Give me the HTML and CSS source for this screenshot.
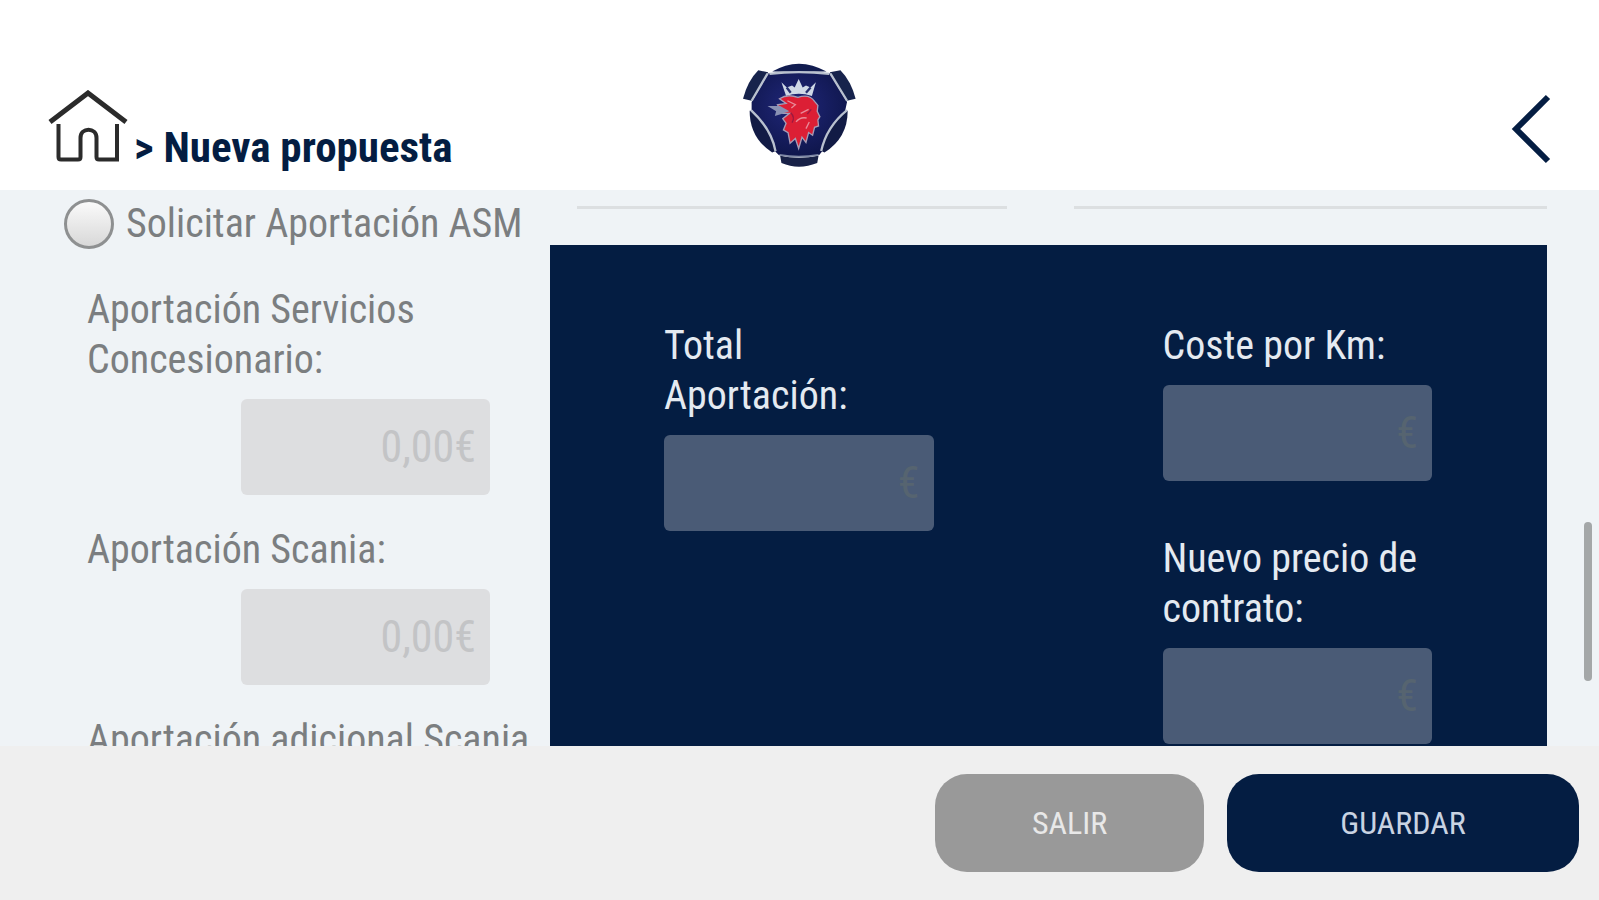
FILE: index.html
```html
<!DOCTYPE html>
<html lang="es">
<head>
<meta charset="utf-8">
<meta name="viewport" content="width=device-width, initial-scale=1">
<title>Nueva propuesta</title>
<link rel="stylesheet" href="styles.css">
</head>
<body>
<header class="header">
  <nav class="crumbs">
    <a class="home" href="#" aria-label="Inicio">
      <svg viewBox="0 0 80 74" fill="none" stroke="#2b2b2b" stroke-width="4">
        <path d="M2 32 40 3 78 32" stroke-width="5"/>
        <path d="M10.500 34V67Q10.500 69.500 13 69.500H30Q32.500 69.500 32.500 67V48C32.500 37 48.500 37 48.500 48V67Q48.500 69.500 51 69.500H69V34"/>
      </svg>
    </a>
    <h1 class="title">&gt; Nueva propuesta</h1>
  </nav>
  <svg class="logo" viewBox="70 35 345 320" role="img" aria-label="Scania">
    <defs>
      <radialGradient id="navy" cx="45%" cy="40%" r="60%">
        <stop offset="0" stop-color="#20277a"/>
        <stop offset="1" stop-color="#0f164c"/>
      </radialGradient>
    </defs>
    <path d="M160 64Q240 16 324 64Z" fill="#111c50"/>
    <path d="M118 60 148 66 98 152 72 146Q86 92 118 60Z" fill="#17234c"/>
    <path d="M366 60 334 66 386 152 412 146Q398 92 366 60Z" fill="#17234c"/>
    <path d="M92 182Q92 264 160 308L180 300 170 230 110 184Z" fill="#121b45"/>
    <path d="M388 182Q388 264 318 308L300 300 310 230 374 184Z" fill="#121b45"/>
    <path d="M148 70Q240 58 334 70L386 156 380 184C352 206 318 248 310 306L302 316Q240 328 180 316L170 306C160 248 128 206 98 180L98 156Z" fill="url(#navy)"/>
    <path d="M184 318Q240 330 300 318L296 340Q240 362 188 340Z" fill="#182147"/>
    <g fill="none" stroke="#b9c1cf" stroke-width="7">
      <path d="M152 71Q240 60 332 71"/>
      <path d="M146 70 98 152M336 70 386 152"/>
      <path d="M96 180C124 206 160 248 170 304M386 180C354 206 320 248 308 304"/>
      <path d="M182 315Q240 326 300 315" stroke="#7f89a6" stroke-width="5"/>
    </g>
    <path d="M188 96 204 112 220 106 228 112 240 86 252 112 262 106 276 112 292 96 280 138Q240 124 202 138Z" fill="#cfd9e6"/>
    <path d="M204 112 216 128M276 112 262 128" stroke="#26306f" stroke-width="7"/>
    <path d="M182 146Q206 130 238 142 272 130 288 154L298 166 296 184 304 200 298 210 300 228 288 232 282 256 270 248 262 278 250 262 240 296 230 266 214 280 208 248 194 240 202 220 192 206 212 190 192 190 176 164 202 160Z" fill="#dc1f35" stroke="#a79cb5" stroke-width="4"/>
    <path d="M146 168 184 168 212 184 188 192 168 198 172 184Z" fill="#8991b4"/>
    <path d="M206 152 230 164 218 174M232 216Q244 200 264 204M246 190 270 178M272 216 262 236" fill="none" stroke="#e98b99" stroke-width="4"/>
    <path d="M216 188Q230 202 220 218M278 178 266 192" fill="none" stroke="#9b1840" stroke-width="4"/>
  </svg>
  <button class="back" type="button" aria-label="Volver">
    <svg viewBox="0 0 40 70" fill="none" stroke="#041d42" stroke-width="6"><path d="M37 3 5 35 37 67"/></svg>
  </button>
</header>

<main class="content">
  <section class="side">
    <label class="choice"><input class="radio" type="radio" name="asm">Solicitar Aportación ASM</label>
    <div class="fields">
      <div class="field">
        <label for="dealer">Aportación Servicios Concesionario:</label>
        <input class="amount" id="dealer" type="text" value="0,00€" readonly>
      </div>
      <div class="field">
        <label for="scania">Aportación Scania:</label>
        <input class="amount" id="scania" type="text" value="0,00€" readonly>
      </div>
      <div class="field">
        <label for="extra">Aportación adicional Scania</label>
        <input class="amount" id="extra" type="text" readonly>
      </div>
    </div>
  </section>
  <section class="main">
    <div class="rules"><hr class="rule"><hr class="rule"></div>
    <div class="panel">
      <div class="column">
        <div class="total">
          <label for="total">Total Aportación:</label>
          <input class="amount dark" id="total" type="text" value="€" readonly>
        </div>
      </div>
      <div class="column">
        <div class="total">
          <label for="km">Coste por Km:</label>
          <input class="amount dark" id="km" type="text" value="€" readonly>
        </div>
        <div class="total">
          <label for="price">Nuevo precio de contrato:</label>
          <input class="amount dark" id="price" type="text" value="€" readonly>
        </div>
      </div>
    </div>
  </section>
  <div class="scrollbar"></div>
</main>

<footer class="footer">
  <button class="button exit" type="button">SALIR</button>
  <button class="button save" type="button">GUARDAR</button>
</footer>
</body>
</html>
```
FILE: styles.css
```css
* { box-sizing: border-box; }

body {
  margin: 0;
  height: 100vh;
  display: flex;
  flex-direction: column;
  background: #eff3f6;
  color: #7b7e80;
  font-family: "Roboto Condensed", "Liberation Sans Narrow", Roboto, sans-serif;
  font-size: 40px;
  line-height: 50px;
}

button, input { font: inherit; }

.header {
  flex: none;
  display: grid;
  grid-template-columns: 1fr auto 1fr;
  align-items: end;
  padding: 62px 48px 22px;
  background: #fff;
}

.crumbs {
  display: flex;
  align-items: flex-end;
  gap: 6px;
}

.home { padding-bottom: 4px; }

.home svg { display: block; width: 80px; height: 74px; }

.title {
  margin: 0;
  font-size: 43px;
  line-height: 42px;
  font-weight: 700;
  color: #041d42;
  white-space: nowrap;
}

.logo { width: 115px; height: 106px; }

.back {
  justify-self: end;
  padding: 0;
  margin-bottom: 4px;
  border: 0;
  background: none;
}

.back svg { display: block; width: 40px; height: 70px; }

.content {
  flex: 1;
  min-height: 0;
  position: relative;
  display: grid;
  grid-template-columns: 550fr 997fr;
  padding-right: 52px;
  overflow: hidden;
}

.side { padding: 9px 0 0 64px; min-width: 0; }

.choice {
  display: flex;
  align-items: center;
  gap: 12px;
  white-space: nowrap;
}

.radio {
  appearance: none;
  flex: none;
  width: 50px;
  height: 50px;
  margin: 0;
  border: 3px solid #8e9091;
  border-radius: 50%;
  background: linear-gradient(#fafafa, #d8d8d8);
}

.fields {
  display: flex;
  flex-direction: column;
  gap: 30px;
  padding: 36px 0 0 23px;
}

.field, .total {
  display: flex;
  flex-direction: column;
  gap: 14px;
}

.amount {
  width: 100%;
  height: 96px;
  padding: 0 14px;
  border: 0;
  border-radius: 6px;
  background: #dddee0;
  color: #c3c4c6;
  font-size: 44px;
  text-align: right;
}

.field .amount {
  width: 249px;
  align-self: flex-end;
  margin-right: 60px;
}

.main { display: flex; flex-direction: column; }

.rules {
  display: grid;
  grid-template-columns: 430fr 474fr;
  gap: 67px;
  padding: 16px 0 36px 27px;
}

.rule {
  width: 100%;
  height: 3px;
  margin: 0;
  border: 0;
  background: #dcdfe1;
}

.panel {
  flex: 1;
  display: grid;
  grid-template-columns: 1fr 1fr;
  padding-top: 76px;
  background: #041d42;
  color: #e4eaf1;
}

.column {
  display: flex;
  flex-direction: column;
  gap: 53px;
  padding: 0 115px 0 114px;
}

.amount.dark { background: #4a5b76; color: #566470; }

.scrollbar {
  position: absolute;
  top: 332px;
  right: 7px;
  width: 8px;
  height: 159px;
  border-radius: 4px;
  background: #a4a7a8;
}

.footer {
  flex: none;
  display: flex;
  justify-content: flex-end;
  align-items: center;
  gap: 23px;
  padding: 28px 20px;
  background: #efefef;
}

.button {
  height: 98px;
  border: 0;
  border-radius: 32px;
  font-size: 32px;
}

.exit { width: 269px; background: #999; color: #e8e8e8; }
.save { width: 352px; background: #041d42; color: #c9d3e2; }
```
